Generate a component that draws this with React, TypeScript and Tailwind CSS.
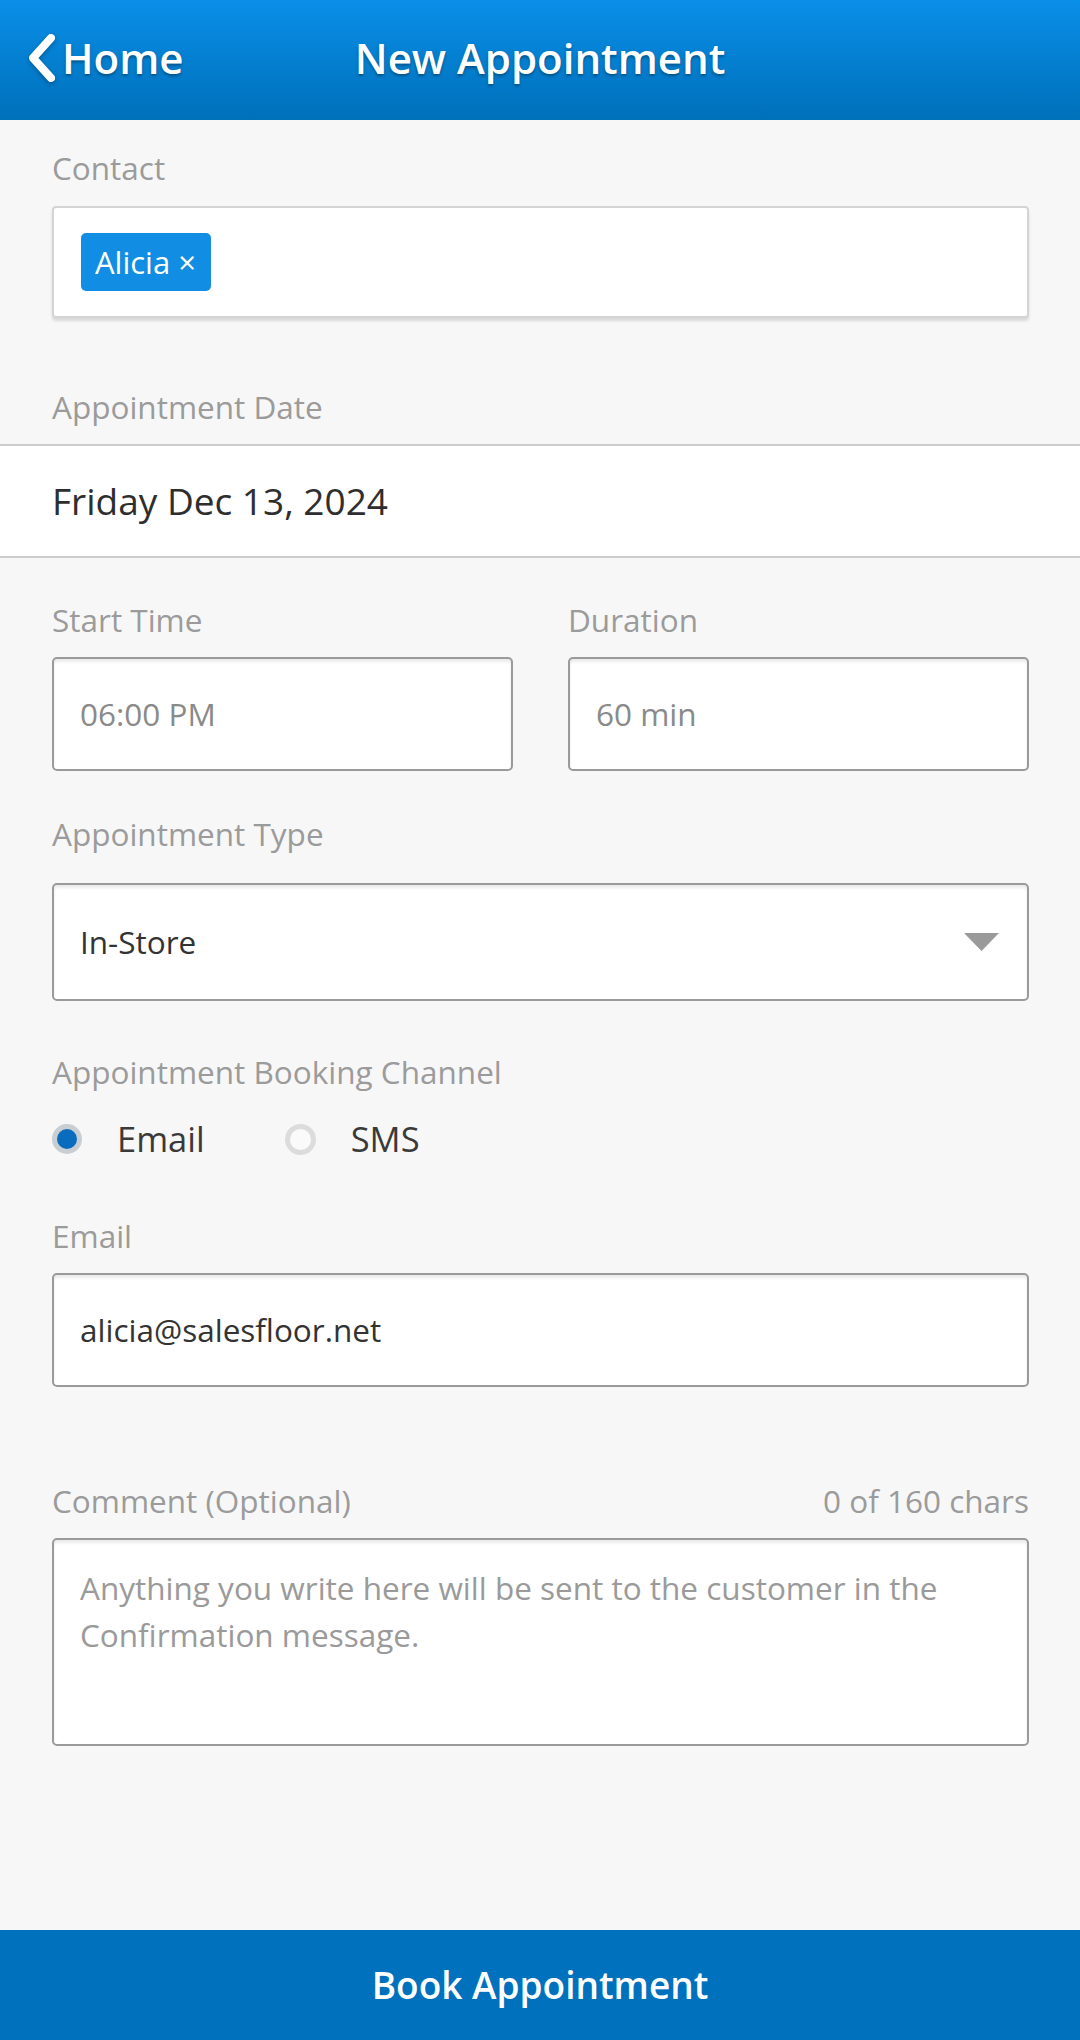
import React from "react";

const font = { fontFamily: '"Open Sans", "Noto Sans", sans-serif' };

function Label({ children, className = "" }: { children: React.ReactNode; className?: string }) {
  return (
    <div className={`text-[31.5px] leading-[40px] text-[#9b9b9b] ${className}`}>{children}</div>
  );
}

function Radio({ checked, label }: { checked: boolean; label: string }) {
  return (
    <div className="flex items-center">
      {checked ? (
        <div className="w-[30px] h-[30px] rounded-full border-[5px] border-[#c9ced3] bg-[#0a6cbf]" />
      ) : (
        <div className="w-[31px] h-[31px] rounded-full border-[5px] border-[#dcdcdc] bg-[#fafafa]" />
      )}
      <span className="ml-[35px] text-[34.5px] leading-[40px] text-[#3a3a3a]">{label}</span>
    </div>
  );
}

export default function App() {
  return (
    <div style={font} className="w-[1080px] h-[2040px] bg-[#f7f7f7] flex flex-col">
      <header className="h-[120px] pb-[5px] shrink-0 bg-gradient-to-b from-[#0a8fe8] to-[#0070ba] grid grid-cols-[1fr_auto_1fr] items-center text-white font-semibold [text-shadow:0_2px_3px_rgba(0,0,0,0.35)]">
        <div className="flex items-center pl-[28px]">
          <svg width="28" height="48" viewBox="0 0 28 48" className="[filter:drop-shadow(0_2px_2px_rgba(0,0,0,0.3))]">
            <path d="M23 4 L5 24 L23 44" fill="none" stroke="white" strokeWidth="8" strokeLinecap="round" strokeLinejoin="round" />
          </svg>
          <span className="ml-[6px] text-[42px] leading-[50px]">Home</span>
        </div>
        <div className="text-[42px] leading-[50px]">New Appointment</div>
        <div />
      </header>

      <main className="flex-1 flex flex-col">
        <div className="pl-[52px] pr-[51px] pt-[28px]">
          <Label>Contact</Label>
          <div className="mt-[18px] h-[112px] bg-white border-2 border-[#d4d4d4] rounded-[4px] shadow-[0_3px_3px_rgba(0,0,0,0.12)] flex items-center pl-[27px]">
            <div className="h-[58px] pl-[14px] pr-[15px] rounded-[5px] bg-[#118de4] text-white text-[31px] flex items-center">
              Alicia ×
            </div>
          </div>
          <Label className="mt-[69px]">Appointment Date</Label>
        </div>

        <div className="mt-[17px] h-[114px] bg-white border-y-2 border-[#cccccc] flex items-center px-[52px] text-[37px] text-[#2e2e2e]">
          Friday Dec 13, 2024
        </div>

        <div className="pl-[52px] pr-[51px] pt-[42px]">
          <div className="grid grid-cols-2 gap-[55px]">
            <div>
              <Label>Start Time</Label>
              <div className="mt-[17px] h-[114px] bg-white border-2 border-[#9a9a9a] rounded-[5px] shadow-[inset_0_3px_3px_rgba(0,0,0,0.08)] flex items-center pl-[26px] text-[31.5px] text-[#8a8a8a]">
                06:00 PM
              </div>
            </div>
            <div>
              <Label>Duration</Label>
              <div className="mt-[17px] h-[114px] bg-white border-2 border-[#9a9a9a] rounded-[5px] shadow-[inset_0_3px_3px_rgba(0,0,0,0.08)] flex items-center pl-[26px] text-[31.5px] text-[#8a8a8a]">
                60 min
              </div>
            </div>
          </div>

          <Label className="mt-[43px]">Appointment Type</Label>
          <div className="mt-[29px] h-[118px] bg-white border-2 border-[#9a9a9a] rounded-[5px] shadow-[inset_0_3px_3px_rgba(0,0,0,0.08)] flex items-center justify-between pl-[26px] pr-[28px] text-[31.5px] text-[#333333]">
            <span>In-Store</span>
            <svg width="35" height="18" viewBox="0 0 35 18">
              <path d="M0 0 H35 L17.5 18 Z" fill="#9a9a9a" />
            </svg>
          </div>

          <Label className="mt-[51px]">Appointment Booking Channel</Label>
          <div className="mt-[27px] flex items-center gap-[80px]">
            <Radio checked label="Email" />
            <Radio checked={false} label="SMS" />
          </div>

          <Label className="mt-[57px]">Email</Label>
          <div className="mt-[17px] h-[114px] bg-white border-2 border-[#9a9a9a] rounded-[5px] shadow-[inset_0_3px_3px_rgba(0,0,0,0.08)] flex items-center pl-[26px] text-[31.5px] text-[#333333]">
            alicia@salesfloor.net
          </div>

          <div className="mt-[94px] flex justify-between">
            <Label>Comment (Optional)</Label>
            <Label>0 of 160 chars</Label>
          </div>
          <div className="mt-[17px] h-[208px] bg-white border-2 border-[#9a9a9a] rounded-[5px] shadow-[inset_0_3px_3px_rgba(0,0,0,0.08)] pl-[26px] pr-[40px] pt-[24px] text-[31.5px] leading-[47px] text-[#9a9a9a]">
            Anything you write here will be sent to the customer in the Confirmation message.
          </div>
        </div>
      </main>

      <footer className="h-[110px] shrink-0 bg-[#0071bc] flex items-center justify-center text-white text-[37px] font-semibold">
        Book Appointment
      </footer>
    </div>
  );
}
